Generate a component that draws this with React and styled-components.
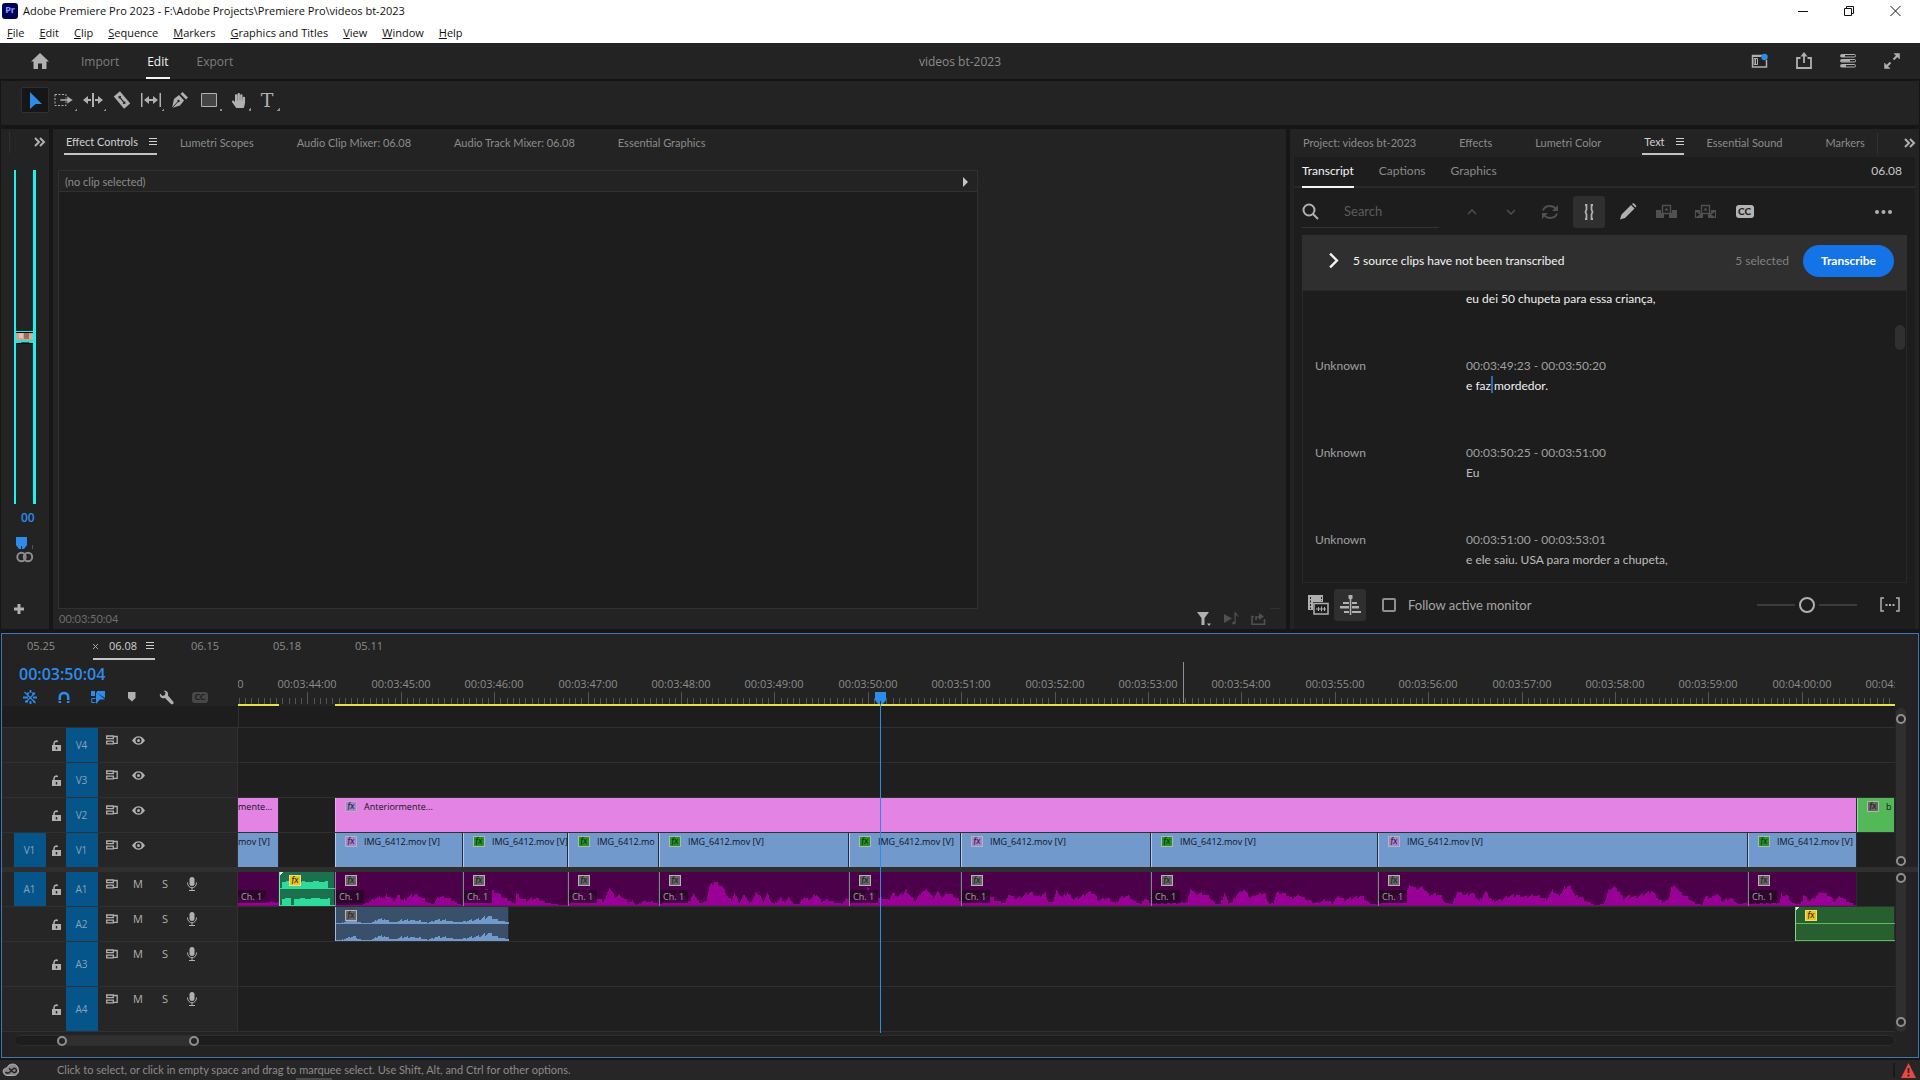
import React from 'react';
import styled, { createGlobalStyle } from 'styled-components';
import { FaHandPaper } from 'react-icons/fa';

const colors = {
  GAP: '#161616',
  PANEL: '#232323',
  WELL: '#1d1d1d',
  LANE: '#1f1f1f',
  LINE: '#303030',
  RAISED: '#2f2f2f',
  ICON: '#b0b0b0',
  DIM: '#505050',
  TEXT: '#8c8c8c',
  TEXT_ACTIVE: '#d0d0d0',
  WHITE: '#f4f4f4',
  BLUE: '#2d8ceb',
  BUTTON: '#1473e6',
  TARGET: '#06558a',
  CYAN: '#1df0f4',
  YELLOW: '#e6e04a',
};

const UI_FONT = "Lato, 'Open Sans', sans-serif";
const WIDE_FONT = "'Open Sans', 'Noto Sans', sans-serif";

// The visible part of the sequence, in timeline units
const LANE_UNITS = 1657;
const pct = units => `${(units / LANE_UNITS) * 100}%`;

const GlobalStyle = createGlobalStyle`
  * {
    box-sizing: border-box;
  }
  body {
    margin: 0;
    background: ${colors.GAP};
    font-family: ${UI_FONT};
    font-size: 11px;
    line-height: 16px;
    color: ${colors.TEXT};
  }
  button, input {
    font: inherit;
    color: inherit;
    background: none;
    border: 0;
    padding: 0;
    margin: 0;
  }
  svg {
    display: block;
    flex: none;
  }
`;

const Page = styled.div`
  min-height: 100vh;
  display: flex;
  flex-direction: column;
`;

const WindowBar = styled.div`
  background: #fff;
  color: #111;
  font-family: ${WIDE_FONT};
  font-size: 11px;
  min-height: 43px;
`;

const TitleRow = styled.div`
  display: flex;
  align-items: center;
  height: 22px;
  padding-left: 2px;
`;

const AppBadge = styled.span`
  width: 16px;
  height: 16px;
  margin-right: 5px;
  border-radius: 3px;
  background: #00005b;
  color: #9999ff;
  font-size: 9px;
  font-weight: 700;
  line-height: 14px;
  text-align: center;
`;

const WindowButtons = styled.div`
  display: flex;
  margin-left: auto;
  padding-right: 2px;
`;

const WindowButton = styled.button`
  width: 46px;
  height: 20px;
  display: flex;
  align-items: center;
  justify-content: center;
`;

const MenuRow = styled.nav`
  display: flex;
  gap: 15px;
  padding: 2px 7px 0;
`;

const MenuItem = styled.button`
  line-height: 18px;
  &::first-letter {
    text-decoration: underline;
  }
`;

const Header = styled.header`
  display: grid;
  grid-template-columns: 1fr auto 1fr;
  align-items: center;
  height: 38px;
  padding: 0 20px;
  background: ${colors.PANEL};
  border-bottom: 2px solid ${colors.GAP};
  font: 12px/18px ${WIDE_FONT};
  > span {
    padding-top: 2px;
  }
`;

const HeaderSide = styled.div`
  display: flex;
  align-items: center;
  gap: ${props => (props.$end ? 28 : 26)}px;
  justify-content: ${props => (props.$end ? 'flex-end' : 'flex-start')};
`;

const IconButton = styled.button`
  display: flex;
  align-items: center;
  justify-content: center;
  color: ${props => (props.$dim ? colors.DIM : colors.ICON)};
`;

const HomeButton = styled(IconButton)`
  margin: 0 5px 0 11px;
`;

const ModeTab = styled.button`
  height: 36px;
  padding: 4px 1px 0;
  color: ${props => (props.$active ? colors.WHITE : '#7e7e7e')};
  border-bottom: 2px solid ${props => (props.$active ? colors.WHITE : 'transparent')};
`;

const ToolStrip = styled.div`
  display: flex;
  gap: 1px;
  min-height: 44px;
  margin: 0 1px 4px;
  padding: 6px 20px;
  background: ${colors.PANEL};
`;

const Tool = styled.button`
  position: relative;
  width: 28px;
  height: 26px;
  border-radius: 2px;
  border: 1px solid ${props => (props.$active ? '#303030' : 'transparent')};
  background: ${props => (props.$active ? '#161616' : 'none')};
  color: ${props => (props.$active ? colors.BLUE : colors.ICON)};
  svg {
    margin: -1px;
  }
`;

const ToolCorner = styled.i`
  position: absolute;
  right: 0;
  bottom: 1px;
  width: 3px;
  height: 3px;
  background: linear-gradient(135deg, transparent 50%, #8c8c8c 50%);
`;

const TypeGlyph = styled.span`
  font-family: 'DejaVu Serif', serif;
  font-size: 19px;
  line-height: 24px;
`;

const HandGlyph = styled.span`
  display: flex;
  justify-content: center;
  font-size: 15px;
  svg {
    margin: 0;
  }
`;

const Workspace = styled.main`
  flex: 1;
  display: grid;
  grid-template-columns: 48px minmax(0, 1233fr) minmax(0, 629fr);
  gap: 4px;
  min-height: 499px;
  padding: 0 1px;
`;

const Panel = styled.section`
  background: ${colors.PANEL};
  display: flex;
  flex-direction: column;
  min-width: 0;
`;

const MonitorPanel = styled(Panel)`
  align-items: flex-start;
`;

const MonitorTop = styled.div`
  align-self: stretch;
  display: flex;
  justify-content: space-between;
  height: 41px;
  padding: 3px 3px 0 8px;
  > button {
    align-self: flex-start;
    margin-top: 5px;
  }
`;

const Divider = styled.i`
  width: 1px;
  height: 21px;
  background: ${colors.LINE};
`;

const MonitorFrame = styled.div`
  flex: 1;
  max-height: 334px;
  width: 22px;
  margin-left: 13px;
  border: solid ${colors.CYAN};
  border-width: 0 3px 0 2px;
  display: flex;
  flex-direction: column;
  justify-content: center;
`;

const MonitorFoot = styled.div`
  padding: 5px 0 0 15px;
  color: ${colors.BLUE};
  font: 600 12px/18px ${WIDE_FONT};
  > span {
    padding-left: 5px;
  }
  > svg {
    margin: 10px 0 39px;
  }
  > button {
    margin-left: -2px;
  }
`;

const TabStrip = styled.div`
  display: flex;
  gap: 23px;
  height: 28px;
  padding-left: 13px;
  white-space: nowrap;
`;

const PanelTab = styled.button`
  display: flex;
  align-items: center;
  height: 26px;
  padding: 2px ${props => (props.$active ? 0 : 20)}px 0 0;
  color: ${props => (props.$active ? colors.TEXT_ACTIVE : colors.TEXT)};
  ${props => props.$active && `
    gap: 11px;
    margin-left: -2px;
    padding-left: 2px;
    border-bottom: 2px solid #c4c4c4;
  `}
`;

const TabStripEnd = styled.div`
  flex: 1;
  display: flex;
  align-items: center;
  justify-content: space-between;
  margin-left: -31px;
  padding-right: 3px;
`;

const EffectBody = styled.div`
  flex: 1;
  display: flex;
  align-items: flex-end;
  padding: 13px 6px 0 5px;
`;

const EffectBox = styled.div`
  flex: 1;
  align-self: stretch;
  border: 1px solid ${colors.LINE};
  background: ${colors.WELL};
`;

const EffectTitle = styled.div`
  display: flex;
  align-items: center;
  justify-content: space-between;
  height: 21px;
  padding: 1px 9px 0 6px;
  background: ${colors.PANEL};
  border-bottom: 1px solid ${colors.LINE};
`;

const EffectAside = styled.div`
  flex: 0 0 302px;
  display: flex;
  justify-content: flex-end;
`;

const Stub = styled.i`
  width: 10px;
  height: 1px;
  background: ${colors.LINE};
`;

const EffectFoot = styled.div`
  display: flex;
  align-items: center;
  justify-content: space-between;
  height: 20px;
  padding: 0 20px 0 6px;
  color: #6e6e6e;
`;

const FootIcons = styled.div`
  display: flex;
  gap: 12px;
`;

const TextWell = styled.div`
  flex: 1;
  display: flex;
  flex-direction: column;
  margin: 0 4px;
  background: ${colors.WELL};
  font-size: 12px;
`;

const SubTabs = styled.div`
  display: flex;
  gap: 25px;
  height: 31px;
  padding: 0 13px 0 8px;
  border-bottom: 2px solid #292929;
`;

const SubTab = styled.button`
  height: 31px;
  padding-bottom: 2px;
  color: ${props => (props.$active ? colors.WHITE : '#8a8a8a')};
  border-bottom: 2px solid ${props => (props.$active ? colors.WHITE : 'transparent')};
`;

const SequenceName = styled.span`
  margin-left: auto;
  line-height: 28px;
  color: #c8c8c8;
`;

const TextTools = styled.div`
  display: flex;
  align-items: center;
  height: 47px;
  padding: 0 12px 0 8px;
  > button {
    width: 39px;
  }
  > button:last-child {
    margin-left: auto;
  }
`;

const SearchField = styled.label`
  display: flex;
  align-items: center;
  gap: 25px;
  width: 137px;
  height: 33px;
  margin-right: 13px;
  border-bottom: 1px solid #333;
  color: ${colors.ICON};
  input {
    width: 90px;
    font-size: 13px;
    outline: 0;
  }
  input::placeholder {
    color: #5c5c5c;
    opacity: 1;
  }
`;

const Square = styled.span`
  display: flex;
  align-items: center;
  justify-content: center;
  width: 32px;
  height: 32px;
  border-radius: 3px;
  background: #2f2f2f;
`;

const Notice = styled.div`
  display: flex;
  align-items: center;
  height: 55px;
  margin: 0 8px;
  padding: 0 13px 4px 23px;
  background: ${colors.RAISED};
  color: ${colors.WHITE};
  > button:first-child {
    margin-right: 11px;
    color: ${colors.WHITE};
  }
`;

const NoticeCount = styled.span`
  margin: 0 14px 0 auto;
  color: #808080;
`;

const PrimaryButton = styled.button`
  height: 32px;
  padding: 0 18px;
  border-radius: 16px;
  background: ${colors.BUTTON};
  color: #fff;
  font-weight: 700;
`;

const Transcript = styled.div`
  flex: 1 1 0px;
  display: flex;
  justify-content: space-between;
  min-height: 0;
  margin: 0 8px;
  border: 1px solid #282828;
  overflow: hidden;
`;

// Scrolled so that the first line is partly under the notice
const Segments = styled.div`
  margin-top: -2px;
  padding-left: 12px;
`;

const Segment = styled.div`
  display: grid;
  grid-template-columns: 151px auto;
  line-height: 20px;
  color: #a0a0a0;
  & + & {
    padding-top: 47px;
  }
`;

const Speech = styled.p`
  grid-column: 2;
  margin: 0;
  color: ${props => (props.$bright ? '#f0f0f0' : '#bdbdbd')};
`;

const Caret = styled.i`
  display: inline-block;
  width: 2px;
  height: 17px;
  margin-right: 1px;
  vertical-align: -3px;
  background: #2b6cb5;
`;

const TranscriptThumb = styled.i`
  width: 10px;
  height: 25px;
  margin: 34px 1px 0 0;
  border-radius: 5px;
  background: #303030;
`;

const TextFoot = styled.div`
  display: flex;
  align-items: center;
  height: 42px;
  margin-bottom: 4px;
  padding: 2px 15px 0 14px;
`;

const MonitorSwitch = styled(IconButton)`
  margin: 0 16px 0 5px;
`;

const Follow = styled.label`
  display: flex;
  align-items: center;
  gap: 12px;
  color: #a6a6a6;
  font-size: 13px;
  input {
    appearance: none;
    width: 14px;
    height: 14px;
    border: 2px solid #8f8f8f;
    border-radius: 2px;
  }
`;

const SizeSlider = styled.input`
  appearance: none;
  width: 100px;
  height: 16px;
  margin: 0 23px 0 auto;
  background: linear-gradient(#3c3c3c, #3c3c3c) center / 100% 2px no-repeat;
  &::-webkit-slider-thumb {
    appearance: none;
    width: 16px;
    height: 16px;
    border: 2px solid #b0b0b0;
    border-radius: 50%;
    background: ${colors.WELL};
    box-shadow: 0 0 0 4px ${colors.WELL};
  }
`;

const TimelinePanel = styled.section`
  margin: 4px 1px 2px;
  background: ${colors.PANEL};
  border: 1px solid #3d78b4;
`;

const SequenceTabs = styled.div`
  display: flex;
  height: 26px;
  padding-left: 9px;
`;

const SequenceTab = styled.button`
  display: flex;
  align-items: center;
  width: 62px;
  margin: 0 20px 0 0;
  border-bottom: 2px solid ${props => (props.$active ? '#c4c4c4' : 'transparent')};
  color: ${props => (props.$active ? colors.TEXT_ACTIVE : colors.TEXT)};
  font: 11px/16px ${WIDE_FONT};
  > span {
    margin: 0 9px 0 ${props => (props.$active ? 11 : 16)}px;
  }
`;

const TimelineBody = styled.div`
  position: relative;
`;

const HeadRow = styled.div`
  display: flex;
  height: 46px;
  padding-right: 23px;
`;

const HeadLeft = styled.div`
  flex: 0 0 236px;
  padding: 3px 0 0 17px;
  font: 600 16px/22px ${WIDE_FONT};
  color: ${colors.BLUE};
`;

const HeadIcons = styled.div`
  display: grid;
  grid-template-columns: repeat(6, 34px);
  align-items: center;
  justify-items: center;
  height: 20px;
  margin: 2px 0 0 -6px;
`;

const Ruler = styled.div`
  position: relative;
  flex: 1;
  overflow: hidden;
  font: 11px/16px ${WIDE_FONT};
`;

const RulerLabel = styled.span`
  position: absolute;
  top: 16px;
  width: 80px;
  margin-left: -40px;
  text-align: center;
`;

const RulerTicks = styled.svg`
  position: absolute;
  left: 0;
  bottom: 2px;
  width: 100%;
  height: 12px;
`;

const RenderBar = styled.i`
  position: absolute;
  bottom: 0;
  height: 2px;
  background: ${colors.YELLOW};
`;

const HoverLine = styled.i`
  position: absolute;
  top: 2px;
  bottom: 3px;
  width: 1px;
  background: #8f8f8f;
`;

const Spare = styled.div`
  display: flex;
  height: 21px;
  background: ${colors.WELL};
  margin-right: 23px;
  &::before {
    content: '';
    width: 236px;
    border-right: 1px solid ${colors.LINE};
  }
`;

const TrackGroup = styled.div`
  display: grid;
  grid-template-columns: minmax(0, 1fr) 23px;
  ${props => props.$divided && 'border-top: 5px solid #2f2f2f;'}
`;

const Track = styled.div`
  display: flex;
  height: ${props => props.$height}px;
  border: solid #303030;
  border-width: ${props => (props.$audio ? '0 0 1px' : '1px 0 0')};
`;

const TrackHead = styled.div`
  flex: 0 0 236px;
  display: grid;
  grid-template-columns: 32px 20px 32px 1fr;
  align-items: center;
  padding-left: 12px;
  background: #262626;
  border-right: 1px solid ${colors.LINE};
`;

const Patch = styled.button`
  align-self: stretch;
  padding-right: 1px;
  background: ${colors.TARGET};
  color: #8ba3b5;
  font: 10px/16px ${WIDE_FONT};
`;

const LockButton = styled(IconButton)`
  grid-column: 2;
`;

const TrackIcons = styled.div`
  align-self: start;
  display: grid;
  grid-template-columns: 27px 26px 28px 26px;
  align-items: center;
  justify-items: center;
  height: 24px;
  color: ${colors.ICON};
  font: 11px/16px ${WIDE_FONT};
`;

const Lane = styled.div`
  position: relative;
  flex: 1;
  overflow: hidden;
  background: ${colors.LANE};
`;

const clipKinds = {
  title: { background: '#e383e3', edge: '#eda9ed' },
  video: { background: '#7199cc', edge: '#b7cce6' },
  still: { background: '#52b858', edge: '#9bd99e' },
  voice: { background: '#4d004a', edge: '#9a7799' },
  beep: { background: '#1b714d', edge: '#8fd9bb', wave: '#2edb9b' },
  camera: { background: '#3a4f6a', edge: '#a5b8d2', wave: '#7199cc' },
  music: { background: '#285f2e', edge: '#8fce92', wave: '#57c05b' },
};

const ClipBox = styled.div`
  position: absolute;
  top: 0;
  bottom: 0;
  overflow: hidden;
  padding: 3px 0 0 ${props => (props.$cut ? 0 : 9)}px;
  background: ${props => clipKinds[props.$kind].background};
  border: solid ${props => clipKinds[props.$kind].edge};
  border-width: 0 0 0 ${props => (props.$cut ? 0 : 1)}px;
  box-shadow: inset -1px 0 #262a36;
  color: #10141c;
  font: 9px/12px ${WIDE_FONT};
  white-space: nowrap;
`;

const ClipLine = styled.div`
  position: relative;
  display: flex;
  gap: 7px;
`;

const fxColors = {
  purple: '#a984d6',
  green: '#1e961e',
  gray: '#666',
  yellow: '#f2c314',
};

const FxBadge = styled.b`
  flex: none;
  width: 12px;
  height: 11px;
  border: 1px solid ${props => (props.$tone === 'yellow' ? '#f0dc8c' : '#b4b4b4')};
  background: ${props => fxColors[props.$tone]};
  color: #1c1c1c;
  font: italic 9px/8px ${UI_FONT};
  text-align: center;
`;

const Channel = styled.span`
  position: absolute;
  left: 0;
  bottom: 3px;
  padding: 0 4px 0 3px;
  background: rgba(30, 8, 30, 0.7);
  color: #a9a3a9;
  font: 9px/13px ${WIDE_FONT};
`;

const FadeCorner = styled.i`
  position: absolute;
  top: 0;
  left: 0;
  width: 4px;
  height: 4px;
  background: linear-gradient(135deg, #e8e8e8 50%, transparent 50%);
`;

const WaveSvg = styled.svg`
  position: absolute;
  left: 0;
  bottom: 0;
  width: 100%;
  height: 34px;
`;

const Bar = styled.div`
  display: flex;
  flex-direction: column;
  justify-content: space-between;
  width: 10px;
  margin: ${props => (props.$audio ? 0 : -19)}px 0 0 1px;
  padding: ${props => (props.$audio ? '1px 0 5px' : '6px 0 1px')};
  border-radius: 5px;
  background: #2f2f2f;
`;

const Knob = styled.i`
  display: block;
  width: 10px;
  height: 10px;
  border: 2px solid #8f8f8f;
  border-radius: 50%;
  background: ${colors.PANEL};
`;

const ZoomBar = styled.div`
  height: 11px;
  margin: 3px 23px 11px 12px;
  border: 1px solid #2d2d2d;
  border-radius: 6px;
  background: ${colors.WELL};
`;

const ZoomThumb = styled.div`
  display: flex;
  justify-content: space-between;
  width: 142px;
  height: 9px;
  margin-left: 42px;
  background: #303030;
  border-radius: 5px;
`;

const TimeOverlay = styled.div`
  position: absolute;
  top: 32px;
  bottom: 13px;
  left: 236px;
  right: 23px;
  pointer-events: none;
`;

const Playhead = styled.div`
  position: absolute;
  top: 0;
  bottom: 0;
  width: 11px;
  margin-left: -5px;
  background: linear-gradient(${colors.BLUE}, ${colors.BLUE}) center / 1px 100% no-repeat;
`;

const StatusBar = styled.footer`
  position: relative;
  display: flex;
  align-items: center;
  height: 20px;
  padding-left: 2px;
  background: #262626;
  > span {
    margin-left: 38px;
  }
`;

const DockHandle = styled.i`
  position: absolute;
  left: 296px;
  bottom: 0;
  width: 36px;
  height: 2px;
  background: #4a4a4a;
`;

const Alert = styled.div`
  margin-left: auto;
  padding: 0 4px 0 6px;
  border-left: 2px solid #1a1a1a;
`;

// Icons

const Hamburger = () => (
  <svg width="8" height="8" fill="none" stroke="currentColor">
    <path d="M0 .5h8M0 3.500h8M0 6.500h8" />
  </svg>
);

const MoreTabs = () => (
  <IconButton aria-label="More panels">
    <svg width="12" height="10" fill="none" stroke="currentColor" strokeWidth="2">
      <path d="M1 1l4 4-4 4M6 1l4 4-4 4" />
    </svg>
  </IconButton>
);

const HomeIcon = () => (
  <svg width="18" height="16" fill="currentColor">
    <path d="M9 0l9 8.500h-2.500V16H11v-5.500H7V16H2.500V8.500H0z" />
  </svg>
);

const WorkspacesIcon = () => (
  <svg width="17" height="16" fill="none" stroke="currentColor" strokeWidth="1.500">
    <path d="M11 2.500H1.500v11.500h14V7" />
    <path d="M1 3h9" strokeWidth="2" />
    <path d="M4.500 5.500v6M3 5.500h3.500v6H3z" strokeWidth="1" />
    <circle cx="13.500" cy="4" r="3.200" fill={colors.BLUE} stroke="none" />
  </svg>
);

const ShareIcon = () => (
  <svg width="16" height="18" fill="none" stroke="currentColor" strokeWidth="1.800">
    <path d="M4.500 6H1v10h14V6h-3.500M8 11V2" />
    <path d="M8 0l3.500 4.500h-7z" fill="currentColor" stroke="none" />
  </svg>
);

const SlidersIcon = () => (
  <svg width="16" height="14" fill="none" stroke="currentColor">
    <rect x=".5" y=".5" width="15" height="2.500" rx="1" />
    <rect x=".5" y="5.500" width="15" height="2.500" rx="1" />
    <rect x=".5" y="10.500" width="15" height="2.500" rx="1" />
    <path d="M1 2h4M1 6.700h9M1 12h5" strokeWidth="2" />
  </svg>
);

const ExpandIcon = () => (
  <svg width="16" height="16" fill="currentColor" stroke="currentColor">
    <path d="M9.500 6.500l4-4M6.500 9.500l-4 4" strokeWidth="2" />
    <path d="M10 .5h5.500V6zM.5 10v5.500H6z" strokeWidth=".5" />
  </svg>
);

const tools = [
  { name: 'Selection', active: true, icon: <path d="M9 5v17l5.500-5H21z" /> },
  { name: 'Track Select Forward', corner: true, icon: (
    <g>
      <path d="M5 7.500h11v11H5z" fill="none" stroke="currentColor" strokeDasharray="2 1.500" />
      <path d="M10 12h7V9l6 4-6 4v-3h-7z" stroke={colors.PANEL} strokeWidth=".5" />
    </g>
  ) },
  { name: 'Ripple Edit', corner: true, icon: (
    <path d="M13 6h2v14h-2zM4 13l5-4v3h3v2H9v3zM24 13l-5-4v3h-3v2h3v3z" />
  ) },
  { name: 'Razor', icon: (
    <g transform="rotate(-40 14 13)">
      <path d="M10 5h8v16h-8z" />
      <path d="M14 8v10M12.500 9.500h3M12.500 16.500h3" stroke={colors.PANEL} strokeWidth="1.300" />
    </g>
  ) },
  { name: 'Slip', corner: true, icon: (
    <path d="M4 6h1.500v14H4zM22.500 6H24v14h-1.500zM7 13l5-4v3h4V9l5 4-5 4v-3h-4v3z" />
  ) },
  { name: 'Pen', icon: (
    <g>
      <path d="M6 21l2-9 5-4 5 5.500-4 5z" />
      <path d="M14.500 7l2-2 5.500 5.500-2 2z" />
      <path d="M6 21l6-6.500" stroke={colors.PANEL} />
      <circle cx="12.500" cy="14" r="1.200" fill={colors.PANEL} />
    </g>
  ) },
  { name: 'Rectangle', corner: true, icon: (
    <path d="M6.500 6.500h15v13h-15z" fill="#454545" stroke="currentColor" />
  ) },
  { name: 'Hand', corner: true, glyph: <HandGlyph><FaHandPaper /></HandGlyph> },
  { name: 'Type', corner: true, glyph: <TypeGlyph>T</TypeGlyph> },
];

const MarkerHead = ({ ticks }) => (
  <svg width={ticks ? 20 : 11} height={ticks ? 28 : 12} fill={colors.BLUE}>
    <path d="M0 0h11v8l-3 4H3L0 8z" />
    <path d="M5 9h1v3H5z" fill="#14324f" />
    {ticks && (
      <g fill="none">
        <path d="M16.500 8v4" stroke="#555" />
        <circle cx="5.500" cy="20" r="4.200" stroke="#8c8c8c" strokeWidth="2" />
        <circle cx="12" cy="20" r="4.200" stroke="#8c8c8c" strokeWidth="2" />
      </g>
    )}
  </svg>
);

const PlusIcon = () => (
  <svg width="10" height="10" stroke={colors.ICON} strokeWidth="3">
    <path d="M0 5h10M5 0v10" />
  </svg>
);

const Thumbnail = () => (
  <svg width="17" height="13" shapeRendering="crispEdges">
    <path d="M0 0h17v13H0z" fill="#0a0a0a" />
    <path d="M0 0h17v1H0z" fill={colors.CYAN} />
    <path d="M0 2h17v7H0z" fill="#c9a596" />
    <path d="M3 2h4v5H3z" fill="#dcc0b4" />
    <path d="M8 2h5v6H8z" fill="#a86b52" />
    <path d="M13 4h4v4h-4z" fill="#c7b29b" />
    <path d="M0 9h17v3H0z" fill="#3fd6cf" />
    <path d="M5 11h8v1H5z" fill="#1f5f5c" />
  </svg>
);

const SearchIcon = () => (
  <svg width="17" height="17" fill="none" stroke="currentColor" strokeWidth="2">
    <circle cx="7" cy="7" r="5.500" />
    <path d="M11 11l5 5" />
  </svg>
);

const ChevronIcon = ({ d, size = 10, width = 1.5 }) => (
  <svg width={size} height={size} viewBox="0 0 10 10" fill="none" stroke="currentColor" strokeWidth={width}>
    <path d={d} />
  </svg>
);

const RefreshIcon = () => (
  <svg width="18" height="16" fill="none" stroke="currentColor" strokeWidth="2">
    <path d="M2 6.500C3 3.500 5.500 2 9 2c2.500 0 4.500 1 6 3M16 9.500c-1 3-3.500 4.500-7 4.500-2.500 0-4.500-1-6-3" />
    <path d="M17 1v6h-6zM1 15V9h6z" fill="currentColor" stroke="none" />
  </svg>
);

const BracesIcon = () => (
  <svg width="14" height="16" fill="none" stroke="currentColor" strokeWidth="1.800">
    <path d="M3 1h1.500v4.500L3.500 8l1 2.500V15H3M11 1H9.500v4.500l1 2.500-1 2.500V15H11" />
  </svg>
);

const PencilIcon = () => (
  <svg width="18" height="17" fill="currentColor">
    <path d="M1 16.500l1.500-5L12 2l3.500 3.500L6 15zM13 1l1.500-1L17.500 3l-1 1.500z" />
  </svg>
);

const LiftIcon = ({ arrows }) => (
  <svg width="21" height="15" fill="currentColor">
    <path d="M0 6h5v3h3v5H0zM21 6h-5v3h-3v5h8z" />
    <path d="M6.500 1.500h8v8h-8z" fill="none" stroke="currentColor" strokeWidth="1.400" />
    <path d="M10.500 3.500l2 3h-4z" />
    {arrows && <path d="M1 8l4 2.500L1 13zM20 8l-4 2.500 4 2.500z" fill={colors.WELL} />}
  </svg>
);

const CaptionChip = styled.span`
  width: ${props => props.$width}px;
  height: ${props => props.$height}px;
  border-radius: 3px;
  background: ${props => (props.$off ? '#484848' : '#b4b4b4')};
  color: #1d1d1d;
  font: 900 ${props => props.$height - 3}px/${props => props.$height}px ${UI_FONT};
  text-align: center;
`;

const DotsIcon = () => (
  <svg width="17" height="4" fill="currentColor">
    <circle cx="2" cy="2" r="2" />
    <circle cx="8.500" cy="2" r="2" />
    <circle cx="15" cy="2" r="2" />
  </svg>
);

const ClipViewIcon = () => (
  <svg width="21" height="20" fill="none" stroke="currentColor">
    <path d="M0 0h15v7H5v8H0z" fill="currentColor" stroke="none" />
    <path d="M2.500 2v12M13.500 2v4" stroke={colors.WELL} strokeDasharray="2 1.500" />
    <path d="M6 8.500h14v10.500H6z" strokeWidth="1.500" />
    <path d="M8 14h10M10.500 12v4M13.500 11.500v5M16.500 12v4" />
  </svg>
);

const AlignIcon = () => (
  <svg width="21" height="20" fill="currentColor">
    <path d="M9.800 3h1.500v17H9.800zM8.500 0h4v3.500l-2 1.500-2-1.500zM3 7h6v2H3zM12 7h5v2h-5zM0 11h9v2.500H0zM12 11h7v2.500h-7zM4 16h5v2H4zM12 16h9v2h-9z" />
  </svg>
);

const GapIcon = () => (
  <svg width="20" height="16" fill="none" stroke="currentColor" strokeWidth="1.500">
    <path d="M4 1H1v13h3M16 1h3v13h-3" />
    <path d="M5.500 8h9" strokeDasharray="2 1.500" strokeWidth="2" />
  </svg>
);

const FilterIcon = () => (
  <svg width="15" height="15" fill="currentColor">
    <path d="M0 0h12L7.500 6v7h-3V6zM10 11.500h4l-2 2.500z" />
  </svg>
);

const PlayNoteIcon = () => (
  <svg width="15" height="14" fill="currentColor">
    <path d="M0 2l8 4.500L0 11zM10.500 0h1.200c.3 2 3 2.500 2.800 5.500-.8-1.500-1.500-2-2.800-2.200V11c-.8 2-3.500 1.800-3.500.2 0-1.200 1-1.700 2.300-1.700z" />
  </svg>
);

const ExportFrameIcon = () => (
  <svg width="15" height="14" fill="none" stroke="currentColor" strokeWidth="1.600">
    <path d="M3 4.500H1v7.700h12.500V7M5 8V5h3" />
    <path d="M8 1l5 3.500L8 8z" fill="currentColor" stroke="none" />
  </svg>
);

const NestIcon = () => (
  <svg width="14" height="14" stroke={colors.BLUE} fill="none">
    <path d="M7.500 0v3M7.500 11v3M0 7.500h5M10 7.500h4M4 3.500h2M9 3.500h3M2 11.500h3M10 11.500h2" strokeWidth="1.800" />
    <path d="M1.500 2l11 11M12 3l-9 9" strokeWidth="1.200" />
  </svg>
);

const MagnetIcon = () => (
  <svg width="12" height="13" stroke={colors.BLUE} fill="none" strokeWidth="2.500">
    <path d="M1.800 12V6c0-5.500 8.400-5.500 8.400 0v6" />
    <path d="M.5 9.500h11" stroke={colors.PANEL} strokeWidth="1" />
  </svg>
);

const LinkedIcon = () => (
  <svg width="15" height="14" fill={colors.BLUE}>
    <path d="M0 1h4v5H0zM6 1h8v7L6 3z" />
    <path d="M4.500 8.500H.8v4h3.700" fill="none" stroke={colors.BLUE} />
    <path d="M5 2l9 7.500H9L5 14z" />
  </svg>
);

const MarkerIcon = () => (
  <svg width="8" height="10" fill={colors.ICON}>
    <path d="M0 0h7.500v6L4 9.500 0 6z" />
  </svg>
);

const WrenchIcon = () => (
  <svg width="15" height="15" fill={colors.ICON}>
    <path d="M1 3.500L3.500 6 6 5 6.500 2.500 4.500.8C7.500 0 9.800 2.300 9 5.500l5.500 6.500c.5 1.800-1 3-2.500 2L6 8C3 9 0 7 1 3.500z" />
  </svg>
);

const LockIcon = () => (
  <svg width="9" height="11" fill="none" stroke="currentColor" strokeWidth="1.500">
    <path d="M2 5V3.500C2.200 1 5 .5 5.500 2" />
    <path d="M0 5h9v6H0z" fill="currentColor" stroke="none" />
    <path d="M4.500 7v2.500" stroke="#262626" />
  </svg>
);

const SyncIcon = () => (
  <svg width="12" height="10" fill="none" stroke="currentColor" strokeWidth="1.300">
    <path d="M.7 1h6.600v2.700H.7zM.7 6.200h6.600v2.700H.7zM8 1.500h3.200v6.800H8" />
  </svg>
);

const EyeIcon = () => (
  <svg width="13" height="9">
    <path d="M0 4.500C3.500-1.200 9.500-1.200 13 4.500 9.500 10.200 3.500 10.200 0 4.500z" fill="currentColor" />
    <circle cx="6.500" cy="4.500" r="3" fill="#262626" />
    <circle cx="6.500" cy="4.500" r="1.500" fill="currentColor" />
  </svg>
);

const MicIcon = () => (
  <svg width="10" height="14" fill="none" stroke="currentColor">
    <rect x="2.500" y="0" width="5" height="9" rx="2.500" fill="currentColor" stroke="none" />
    <path d="M.5 5.500c0 7 9 7 9 0M5 11v2M2 13.500h6" />
  </svg>
);

const CloudIcon = () => (
  <svg width="17" height="14" fill="none" stroke="#b4b4b4" strokeWidth="1.600">
    <path d="M4.500 12.500C-.2 11 .2 5 5 5c1.500-5 9.500-5.500 11 0 1.500 4-.5 7.500-4.500 7.500z" fill="#8a8a8a" strokeWidth="1" />
    <path d="M3.500 9c1 1.500 3 1.500 4.200.3L11 6c1.500-1.500 3.800 0 3.300 2-.5 1.800-2.500 2-3.600.8L7 5.200" stroke="#262626" />
  </svg>
);

const WarningIcon = () => (
  <svg width="15" height="15">
    <path d="M7.500 0L15 15H0z" fill="#ea4743" />
    <path d="M7.500 5v5M7.500 11.500v2" stroke="#262626" strokeWidth="1.800" />
  </svg>
);

// Timeline data

const SILENT = [[0, 1], [40, 1]];

const voiceWaves = {
  a: [[0, 8], [27, 7], [30, 3], [34, 5], [38, 3], [41, 4]],
  b: [[0, 1], [25, 1], [32, 4], [40, 8], [45, 10], [48, 7], [50, 11], [58, 6], [61, 11], [68, 5], [73, 9], [80, 12], [87, 8], [93, 3], [98, 2], [103, 9], [110, 9], [118, 5], [122, 3], [127, 1]],
  c: [[0, 5], [10, 10], [18, 17], [28, 15], [33, 13], [38, 9], [43, 7], [48, 3], [51, 3], [53, 13], [57, 8], [63, 5], [68, 8], [75, 7], [82, 4], [88, 2], [104, 1]],
  d: [[0, 2], [8, 15], [18, 16], [27, 8], [34, 5], [37, 10], [40, 19], [44, 12], [47, 9], [52, 11], [56, 7], [60, 4], [65, 5], [68, 1], [76, 5], [83, 4], [90, 2]],
  e: [[0, 2], [10, 8], [18, 15], [27, 6], [30, 5], [33, 14], [37, 5], [42, 3], [46, 6], [49, 20], [54, 24], [60, 21], [64, 16], [68, 8], [71, 6], [74, 13], [79, 3], [84, 12], [89, 3], [93, 8], [97, 14], [101, 10], [103, 4], [108, 12], [112, 4], [115, 2], [121, 8], [126, 4], [130, 9], [134, 2], [140, 2], [144, 9], [149, 7], [153, 9], [157, 12], [162, 5], [168, 6], [175, 4], [182, 2], [188, 8]],
  f: [[0, 3], [14, 12], [17, 18], [22, 15], [27, 8], [34, 8], [38, 6], [42, 13], [47, 10], [52, 12], [56, 17], [62, 9], [66, 5], [72, 14], [78, 16], [84, 8], [88, 15], [93, 8], [97, 13], [104, 10], [110, 6]],
  g: [[0, 3], [27, 10], [35, 5], [43, 3], [46, 12], [54, 7], [60, 10], [68, 14], [76, 9], [83, 13], [86, 4], [90, 3], [94, 16], [101, 9], [106, 13], [112, 7], [119, 9], [127, 14], [133, 12], [137, 6], [146, 8], [154, 3], [160, 9], [167, 10], [174, 4], [180, 2], [183, 8], [188, 4]],
  h: [[0, 2], [27, 3], [35, 4], [38, 18], [43, 12], [49, 13], [57, 9], [62, 3], [68, 2], [72, 13], [76, 3], [80, 4], [84, 11], [91, 17], [98, 8], [102, 11], [113, 13], [118, 2], [122, 3], [125, 13], [132, 13], [140, 8], [148, 11], [156, 6], [164, 3], [174, 6], [181, 3], [187, 10], [193, 6], [200, 8], [210, 10], [218, 3], [226, 1]],
  i: [[0, 2], [27, 14], [31, 21], [38, 17], [43, 19], [50, 11], [56, 12], [62, 10], [66, 3], [73, 2], [78, 15], [86, 11], [93, 13], [100, 5], [106, 15], [113, 5], [121, 6], [130, 10], [137, 11], [146, 9], [154, 11], [162, 9], [167, 6], [173, 16], [179, 10], [185, 18], [192, 20], [197, 10], [203, 9], [208, 5], [217, 1], [225, 2], [230, 15], [235, 20], [241, 14], [245, 7], [250, 10], [258, 9], [266, 12], [274, 15], [280, 7], [284, 4], [290, 6], [293, 19], [297, 20], [302, 13], [309, 9], [316, 3], [323, 1], [327, 9], [333, 8], [338, 13], [344, 5], [352, 8], [360, 2], [368, 3]],
  j: [[0, 2], [27, 3], [30, 3], [32, 12], [38, 10], [43, 3], [51, 2], [55, 11], [61, 5], [66, 8], [72, 14], [80, 11], [86, 5], [92, 10], [98, 5], [107, 1]],
};

const cameraWave = [[0, 0], [8, 2], [17, 5], [25, 1], [35, 1], [42, 5], [48, 5], [54, 2], [60, 2], [65, 4], [75, 4], [85, 3], [92, 1], [100, 4], [110, 4], [120, 2], [126, 2], [136, 4], [145, 5], [153, 8], [160, 5], [168, 3], [173, 2]];

const VIDEO = 'IMG_6412.mov [V]';

const videoTracks = [
  { name: 'V4', clips: [] },
  { name: 'V3', clips: [] },
  { name: 'V2', clips: [
    { kind: 'title', from: 0, to: 41, label: 'mente...', cut: true },
    { kind: 'title', from: 97, to: 1619, label: 'Anteriormente...', fx: 'purple' },
    { kind: 'still', from: 1619, to: 1657, label: 'b', fx: 'gray' },
  ] },
  { name: 'V1', source: true, clips: [
    { kind: 'video', from: 0, to: 41, label: 'mov [V]', cut: true },
    { kind: 'video', from: 97, to: 225, label: VIDEO, fx: 'purple' },
    { kind: 'video', from: 225, to: 330, label: VIDEO, fx: 'green' },
    { kind: 'video', from: 330, to: 421, label: 'IMG_6412.mo', fx: 'green' },
    { kind: 'video', from: 421, to: 611, label: VIDEO, fx: 'green' },
    { kind: 'video', from: 611, to: 723, label: VIDEO, fx: 'green' },
    { kind: 'video', from: 723, to: 913, label: VIDEO, fx: 'purple' },
    { kind: 'video', from: 913, to: 1140, label: VIDEO, fx: 'green' },
    { kind: 'video', from: 1140, to: 1510, label: VIDEO, fx: 'purple' },
    { kind: 'video', from: 1510, to: 1619, label: VIDEO, fx: 'green' },
  ] },
];

const voice = (from, to, wave, cut) => ({ kind: 'voice', from, to, wave: voiceWaves[wave], channel: 'Ch. 1', fx: cut ? null : 'gray', cut });

const audioTracks = [
  { name: 'A1', source: true, height: 35, clips: [
    voice(0, 41, 'a', true),
    { kind: 'beep', from: 41, to: 97, fx: 'yellow', fade: true },
    voice(97, 225, 'b'),
    voice(225, 330, 'c'),
    voice(330, 421, 'd'),
    voice(421, 611, 'e'),
    voice(611, 723, 'f'),
    voice(723, 913, 'g'),
    voice(913, 1140, 'h'),
    voice(1140, 1510, 'i'),
    voice(1510, 1619, 'j'),
  ] },
  { name: 'A2', height: 35, clips: [
    { kind: 'camera', from: 97, to: 271, wave: cameraWave, fx: 'gray' },
    { kind: 'music', from: 1557, to: 1657, wave: SILENT, fx: 'yellow', fade: true },
  ] },
  { name: 'A3', height: 45, clips: [] },
  { name: 'A4', height: 45, clips: [] },
];

// Steps along the peaks one unit at a time, roughened a little like sampled audio
const wavePath = (points, width, base) => {
  let d = `M0 ${base}`;
  let at = 0;
  for (let x = 0; x < width; x++) {
    while (at < points.length - 2 && points[at + 1][0] <= x) at++;
    const [x0, h0] = points[at];
    const [x1, h1] = points[at + 1];
    const t = Math.min(1, (x - x0) / (x1 - x0));
    const noise = ((x * 7919 + width * 31) % 13) / 13 - 0.5;
    const h = h0 + (h1 - h0) * t;
    d += `V${base - Math.max(0, Math.round(h + noise * Math.min(3, h / 2)))}H${x + 1}`;
  }
  return `${d}V${base}z`;
};

const Waveform = ({ kind, wave, width }) => {
  const color = clipKinds[kind].wave;
  return (
    <WaveSvg viewBox={`0 0 ${width} 34`} preserveAspectRatio="none" shapeRendering="crispEdges">
      {kind === 'voice' && <path d={wavePath(wave, width, 34)} fill="#990096" />}
      {kind === 'voice' && <path d={`M0 33h${width}v1H0z`} fill="#7b0a79" />}
      {kind === 'camera' && (
        <path d={wavePath(wave, width, 17) + wavePath(wave, width, 34)} fill={color} />
      )}
      {kind === 'beep' && (
        <path fill={color} d="M2 10h4v-1h5v5h3v-4h8v-1h3v1h9v-1h6v1h6v-1h3v7H2zM2 27h3v-1h6v8H2zM14 27h6v-1h5v1h7v-1h9v1h8v-1h2v8H14z" />
      )}
      {(kind === 'camera' || kind === 'music' || kind === 'beep') && (
        <path d={`M0 16h${width}v1H0zM0 33h${width}v1H0z`} fill={color} />
      )}
    </WaveSvg>
  );
};

const Clip = ({ kind, from, to, label, fx, cut, channel, wave, fade }) => (
  <ClipBox $kind={kind} $cut={cut} style={{ left: pct(from), width: pct(to - from) }}>
    {(wave || kind === 'beep') && <Waveform kind={kind} wave={wave} width={to - from} />}
    {fade && <FadeCorner />}
    <ClipLine>
      {fx && <FxBadge $tone={fx}>fx</FxBadge>}
      {label}
    </ClipLine>
    {channel && <Channel>{channel}</Channel>}
  </ClipBox>
);

const TrackRow = ({ track, audio }) => (
  <Track $height={track.height || 35} $audio={audio}>
    <TrackHead>
      {track.source && <Patch>{track.name}</Patch>}
      <LockButton aria-label={`Lock ${track.name}`}><LockIcon /></LockButton>
      <Patch>{track.name}</Patch>
      <TrackIcons>
        <IconButton aria-label="Sync lock"><SyncIcon /></IconButton>
        {audio
          ? <>
            <button>M</button>
            <button>S</button>
            <IconButton aria-label="Voice-over record"><MicIcon /></IconButton>
          </>
          : <IconButton aria-label="Track output"><EyeIcon /></IconButton>
        }
      </TrackIcons>
    </TrackHead>
    <Lane>
      {track.clips.map(clip => <Clip key={clip.from} {...clip} />)}
    </Lane>
  </Track>
);

// One label per second, fifteen ticks between
const FIRST_TICK = -24;
const SECOND = 93.4;
const seconds = Array.from({ length: 19 }, (_, i) => {
  const total = 43 + i;
  const minute = total >= 60 ? '04' : '03';
  return {
    at: Math.round(FIRST_TICK + SECOND * i),
    label: `00:${minute}:${String(total % 60).padStart(2, '0')}:00`,
  };
});

const tickPath = () => {
  let d = '';
  for (let i = 0; i < 285; i++) {
    const x = Math.round(FIRST_TICK + (SECOND / 15) * i);
    if (x >= 0 && x < LANE_UNITS) d += i % 15 === 0 ? `M${x} 0h1v12h-1z` : `M${x} 6h1v6h-1z`;
  }
  return d;
};

const segments = [
  { time: '00:03:49:23 - 00:03:50:20', text: <>e faz<Caret />mordedor.</>, bright: true },
  { time: '00:03:50:25 - 00:03:51:00', text: 'Eu' },
  { time: '00:03:51:00 - 00:03:53:01', text: 'e ele saiu. USA para morder a chupeta,' },
];

const Tabs = ({ names, active }) => names.map(name => (
  <PanelTab key={name} $active={name === active}>
    {name}
    {name === active && <Hamburger />}
  </PanelTab>
));

const MENUS = ['File', 'Edit', 'Clip', 'Sequence', 'Markers', 'Graphics and Titles', 'View', 'Window', 'Help'];

const TitleArea = () => (
  <WindowBar>
    <TitleRow>
      <AppBadge>Pr</AppBadge>
      Adobe Premiere Pro 2023 - F:\Adobe Projects\Premiere Pro\videos bt-2023
      <WindowButtons>
        <WindowButton aria-label="Minimize">
          <svg width="10" height="10" stroke="#111"><path d="M0 5.500h10" /></svg>
        </WindowButton>
        <WindowButton aria-label="Restore">
          <svg width="10" height="10" stroke="#111" fill="none"><path d="M.5 2.500h7v7h-7zM2.500 2V.5h7v7H8" /></svg>
        </WindowButton>
        <WindowButton aria-label="Close">
          <svg width="11" height="10" stroke="#111"><path d="M.5 0l10 10M10.500 0l-10 10" /></svg>
        </WindowButton>
      </WindowButtons>
    </TitleRow>
    <MenuRow>
      {MENUS.map(name => <MenuItem key={name}>{name}</MenuItem>)}
    </MenuRow>
  </WindowBar>
);

const TextPanel = () => (
  <Panel>
    <TabStrip>
      <Tabs
        names={['Project: videos bt-2023', 'Effects', 'Lumetri Color', 'Text', 'Essential Sound', 'Markers']}
        active="Text"
      />
      <TabStripEnd>
        <Divider />
        <MoreTabs />
      </TabStripEnd>
    </TabStrip>
    <TextWell>
      <SubTabs>
        <SubTab $active>Transcript</SubTab>
        <SubTab>Captions</SubTab>
        <SubTab>Graphics</SubTab>
        <SequenceName>06.08</SequenceName>
      </SubTabs>
      <TextTools>
        <SearchField>
          <SearchIcon />
          <input aria-label="Search" placeholder="Search" />
        </SearchField>
        <IconButton $dim aria-label="Previous"><ChevronIcon d="M1 7l4-4 4 4" /></IconButton>
        <IconButton $dim aria-label="Next"><ChevronIcon d="M1 3l4 4 4-4" /></IconButton>
        <IconButton $dim aria-label="Replace"><RefreshIcon /></IconButton>
        <IconButton aria-label="Pauses"><Square><BracesIcon /></Square></IconButton>
        <IconButton aria-label="Edit text"><PencilIcon /></IconButton>
        <IconButton $dim aria-label="Lift"><LiftIcon /></IconButton>
        <IconButton $dim aria-label="Extract"><LiftIcon arrows /></IconButton>
        <IconButton aria-label="Create captions"><CaptionChip $width={18} $height={13}>CC</CaptionChip></IconButton>
        <IconButton aria-label="More"><DotsIcon /></IconButton>
      </TextTools>
      <Notice>
        <IconButton aria-label="Expand"><ChevronIcon d="M3 1l4 4-4 4" size={17} width={1.4} /></IconButton>
        5 source clips have not been transcribed
        <NoticeCount>5 selected</NoticeCount>
        <PrimaryButton>Transcribe</PrimaryButton>
      </Notice>
      <Transcript>
        <Segments>
          <Segment><Speech $bright>eu dei 50 chupeta para essa criança,</Speech></Segment>
          {segments.map(segment => (
            <Segment key={segment.time}>
              <span>Unknown</span>
              <span>{segment.time}</span>
              <Speech $bright={segment.bright}>{segment.text}</Speech>
            </Segment>
          ))}
        </Segments>
        <TranscriptThumb />
      </Transcript>
      <TextFoot>
        <IconButton aria-label="Clip view"><ClipViewIcon /></IconButton>
        <MonitorSwitch aria-label="Sequence view"><Square><AlignIcon /></Square></MonitorSwitch>
        <Follow>
          <input type="checkbox" />
          Follow active monitor
        </Follow>
        <SizeSlider type="range" aria-label="Text size" defaultValue="50" />
        <IconButton aria-label="Pause length"><GapIcon /></IconButton>
      </TextFoot>
    </TextWell>
  </Panel>
);

const Timeline = () => (
  <TimelinePanel>
    <SequenceTabs>
      {['05.25', '06.08', '06.15', '05.18', '05.11'].map(name => {
        const active = name === '06.08';
        return (
          <SequenceTab key={name} $active={active}>
            {active && <svg width="5" height="5" stroke="#aaa"><path d="M0 0l5 5M5 0L0 5" /></svg>}
            <span>{name}</span>
            {active && <Hamburger />}
          </SequenceTab>
        );
      })}
    </SequenceTabs>
    <TimelineBody>
      <HeadRow>
        <HeadLeft>
          00:03:50:04
          <HeadIcons>
            <NestIcon />
            <MagnetIcon />
            <LinkedIcon />
            <MarkerIcon />
            <WrenchIcon />
            <CaptionChip $off $width={16} $height={11}>CC</CaptionChip>
          </HeadIcons>
        </HeadLeft>
        <Ruler>
          {seconds.map(({ at, label }) => (
            <RulerLabel key={label} style={{ left: pct(at) }}>{label}</RulerLabel>
          ))}
          <RulerTicks viewBox={`0 0 ${LANE_UNITS} 12`} preserveAspectRatio="none" shapeRendering="crispEdges">
            <path d={tickPath()} fill="#555" />
          </RulerTicks>
          <RenderBar style={{ left: 0, width: pct(41) }} />
          <RenderBar style={{ left: pct(97), right: 0 }} />
          <HoverLine style={{ left: pct(945) }} />
        </Ruler>
      </HeadRow>
      <Spare />
      <TrackGroup>
        <div>{videoTracks.map(track => <TrackRow key={track.name} track={track} />)}</div>
        <Bar><Knob /><Knob /></Bar>
      </TrackGroup>
      <TrackGroup $divided>
        <div>{audioTracks.map(track => <TrackRow key={track.name} track={track} audio />)}</div>
        <Bar $audio><Knob /><Knob /></Bar>
      </TrackGroup>
      <ZoomBar>
        <ZoomThumb><Knob /><Knob /></ZoomThumb>
      </ZoomBar>
      <TimeOverlay>
        <Playhead style={{ left: pct(642) }}><MarkerHead /></Playhead>
      </TimeOverlay>
    </TimelineBody>
  </TimelinePanel>
);

export default () => (
  <Page>
    <GlobalStyle />
    <TitleArea />
    <Header>
      <HeaderSide>
        <HomeButton aria-label="Home"><HomeIcon /></HomeButton>
        <ModeTab>Import</ModeTab>
        <ModeTab $active>Edit</ModeTab>
        <ModeTab>Export</ModeTab>
      </HeaderSide>
      <span>videos bt-2023</span>
      <HeaderSide $end>
        <IconButton aria-label="Workspaces"><WorkspacesIcon /></IconButton>
        <IconButton aria-label="Quick export"><ShareIcon /></IconButton>
        <IconButton aria-label="Progress"><SlidersIcon /></IconButton>
        <IconButton aria-label="Full screen"><ExpandIcon /></IconButton>
      </HeaderSide>
    </Header>
    <ToolStrip>
      {tools.map(({ name, active, icon, glyph, corner }) => (
        <Tool key={name} $active={active} aria-label={name}>
          {glyph || <svg width="28" height="26" fill="currentColor">{icon}</svg>}
          {corner && <ToolCorner />}
        </Tool>
      ))}
    </ToolStrip>
    <Workspace>
      <MonitorPanel>
        <MonitorTop>
          <Divider />
          <MoreTabs />
        </MonitorTop>
        <MonitorFrame><Thumbnail /></MonitorFrame>
        <MonitorFoot>
          <span>00</span>
          <MarkerHead ticks />
          <IconButton aria-label="Add button"><PlusIcon /></IconButton>
        </MonitorFoot>
      </MonitorPanel>
      <Panel>
        <TabStrip>
          <Tabs
            names={['Effect Controls', 'Lumetri Scopes', 'Audio Clip Mixer: 06.08', 'Audio Track Mixer: 06.08', 'Essential Graphics']}
            active="Effect Controls"
          />
        </TabStrip>
        <EffectBody>
          <EffectBox>
            <EffectTitle>
              (no clip selected)
              <svg width="5" height="10" fill="#c4c4c4"><path d="M0 0l5 5-5 5z" /></svg>
            </EffectTitle>
          </EffectBox>
          <EffectAside><Stub /></EffectAside>
        </EffectBody>
        <EffectFoot>
          00:03:50:04
          <FootIcons>
            <IconButton aria-label="Filter"><FilterIcon /></IconButton>
            <IconButton $dim aria-label="Play audio"><PlayNoteIcon /></IconButton>
            <IconButton $dim aria-label="Export"><ExportFrameIcon /></IconButton>
          </FootIcons>
        </EffectFoot>
      </Panel>
      <TextPanel />
    </Workspace>
    <Timeline />
    <StatusBar>
      <CloudIcon />
      <span>Click to select, or click in empty space and drag to marquee select. Use Shift, Alt, and Ctrl for other options.</span>
      <DockHandle />
      <Alert><WarningIcon /></Alert>
    </StatusBar>
  </Page>
);
